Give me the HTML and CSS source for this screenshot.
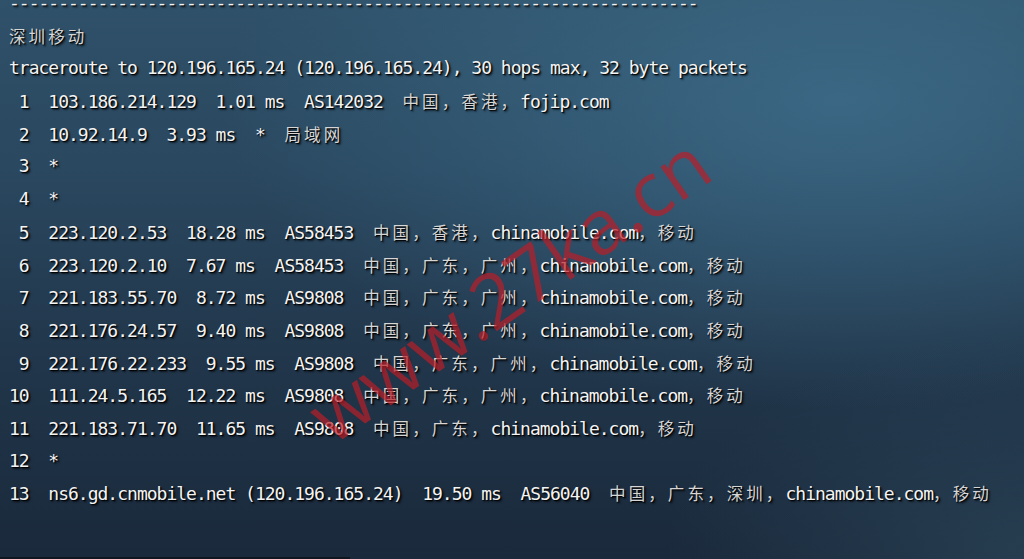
FILE: index.html
```html
<!DOCTYPE html>
<html>
<head>
<title>traceroute 深圳移动</title>
<meta name="viewport" content="width=device-width, initial-scale=1">
<link rel="stylesheet" href="styles.css">
</head>
<body>
<div class="screen">
  <div class="term">
    <div class="line">----------------------------------------------------------------------</div>
    <div class="line"><span class="cn">深圳移动</span></div>
    <div class="line">traceroute to 120.196.165.24 (120.196.165.24), 30 hops max, 32 byte packets</div>
    <div class="line"> 1  103.186.214.129  1.01 ms  AS142032  <span class="cn">中国，香港，</span>fojip.com</div>
    <div class="line"> 2  10.92.14.9  3.93 ms  *  <span class="cn">局域网</span></div>
    <div class="line"> 3  *</div>
    <div class="line"> 4  *</div>
    <div class="line"> 5  223.120.2.53  18.28 ms  AS58453  <span class="cn">中国，香港，</span>chinamobile.com<span class="cn">，移动</span></div>
    <div class="line"> 6  223.120.2.10  7.67 ms  AS58453  <span class="cn">中国，广东，广州，</span>chinamobile.com<span class="cn">，移动</span></div>
    <div class="line"> 7  221.183.55.70  8.72 ms  AS9808  <span class="cn">中国，广东，广州，</span>chinamobile.com<span class="cn">，移动</span></div>
    <div class="line"> 8  221.176.24.57  9.40 ms  AS9808  <span class="cn">中国，广东，广州，</span>chinamobile.com<span class="cn">，移动</span></div>
    <div class="line"> 9  221.176.22.233  9.55 ms  AS9808  <span class="cn">中国，广东，广州，</span>chinamobile.com<span class="cn">，移动</span></div>
    <div class="line">10  111.24.5.165  12.22 ms  AS9808  <span class="cn">中国，广东，广州，</span>chinamobile.com<span class="cn">，移动</span></div>
    <div class="line">11  221.183.71.70  11.65 ms  AS9808  <span class="cn">中国，广东，</span>chinamobile.com<span class="cn">，移动</span></div>
    <div class="line">12  *</div>
    <div class="line">13  ns6.gd.cnmobile.net (120.196.165.24)  19.50 ms  AS56040  <span class="cn">中国，广东，深圳，</span>chinamobile.com<span class="cn">，移动</span></div>
  </div>
  <div class="watermark">www.27ka.cn</div>
  <div class="edge"></div>
</div>
</body>
</html>
```

FILE: styles.css
```css
html, body { margin: 0; padding: 0; height: 100%; overflow: hidden; }
body { background: #1b2a3b; }
.screen { position: relative; width: 100%; height: 100%; overflow: hidden;
  background:
    radial-gradient(ellipse 60% 55% at 82% 18%, rgba(62,110,140,0.8) 0%, rgba(62,110,140,0) 100%),
    radial-gradient(ellipse 35% 40% at 100% 100%, rgba(50,80,100,0.5) 0%, rgba(50,80,100,0) 100%),
    linear-gradient(180deg, #2f5169 0%, #2a4860 30%, #22384d 60%, #1a293b 100%); }
.term { margin-top: -13px; padding-left: 9px; font-family: "DejaVu Sans Mono", "Liberation Mono", monospace; font-size: 18px; letter-spacing: -1px; color: #f4f4f4; text-shadow: 1px 1px 1px #000, 2px 2px 2px rgba(0,0,0,0.6); }
.line { white-space: pre; height: 32.7px; line-height: 32.7px; }
.cn { font-family: "Noto Sans CJK SC", sans-serif; font-size: 16.5px; letter-spacing: 3.1px; color: #d6d6d6; font-weight: 400; }
.watermark { position: absolute; left: 508px; top: 288px; transform: translate(-50%, -50%) rotate(-35deg); font-family: "Open Sans", "Liberation Sans", sans-serif; font-weight: 400; font-size: 76px; color: rgba(185,30,40,0.7); white-space: nowrap; line-height: 1; }
.edge { position: absolute; left: 0; bottom: 0; width: 350px; height: 2px; background: #0e1620; }
```
